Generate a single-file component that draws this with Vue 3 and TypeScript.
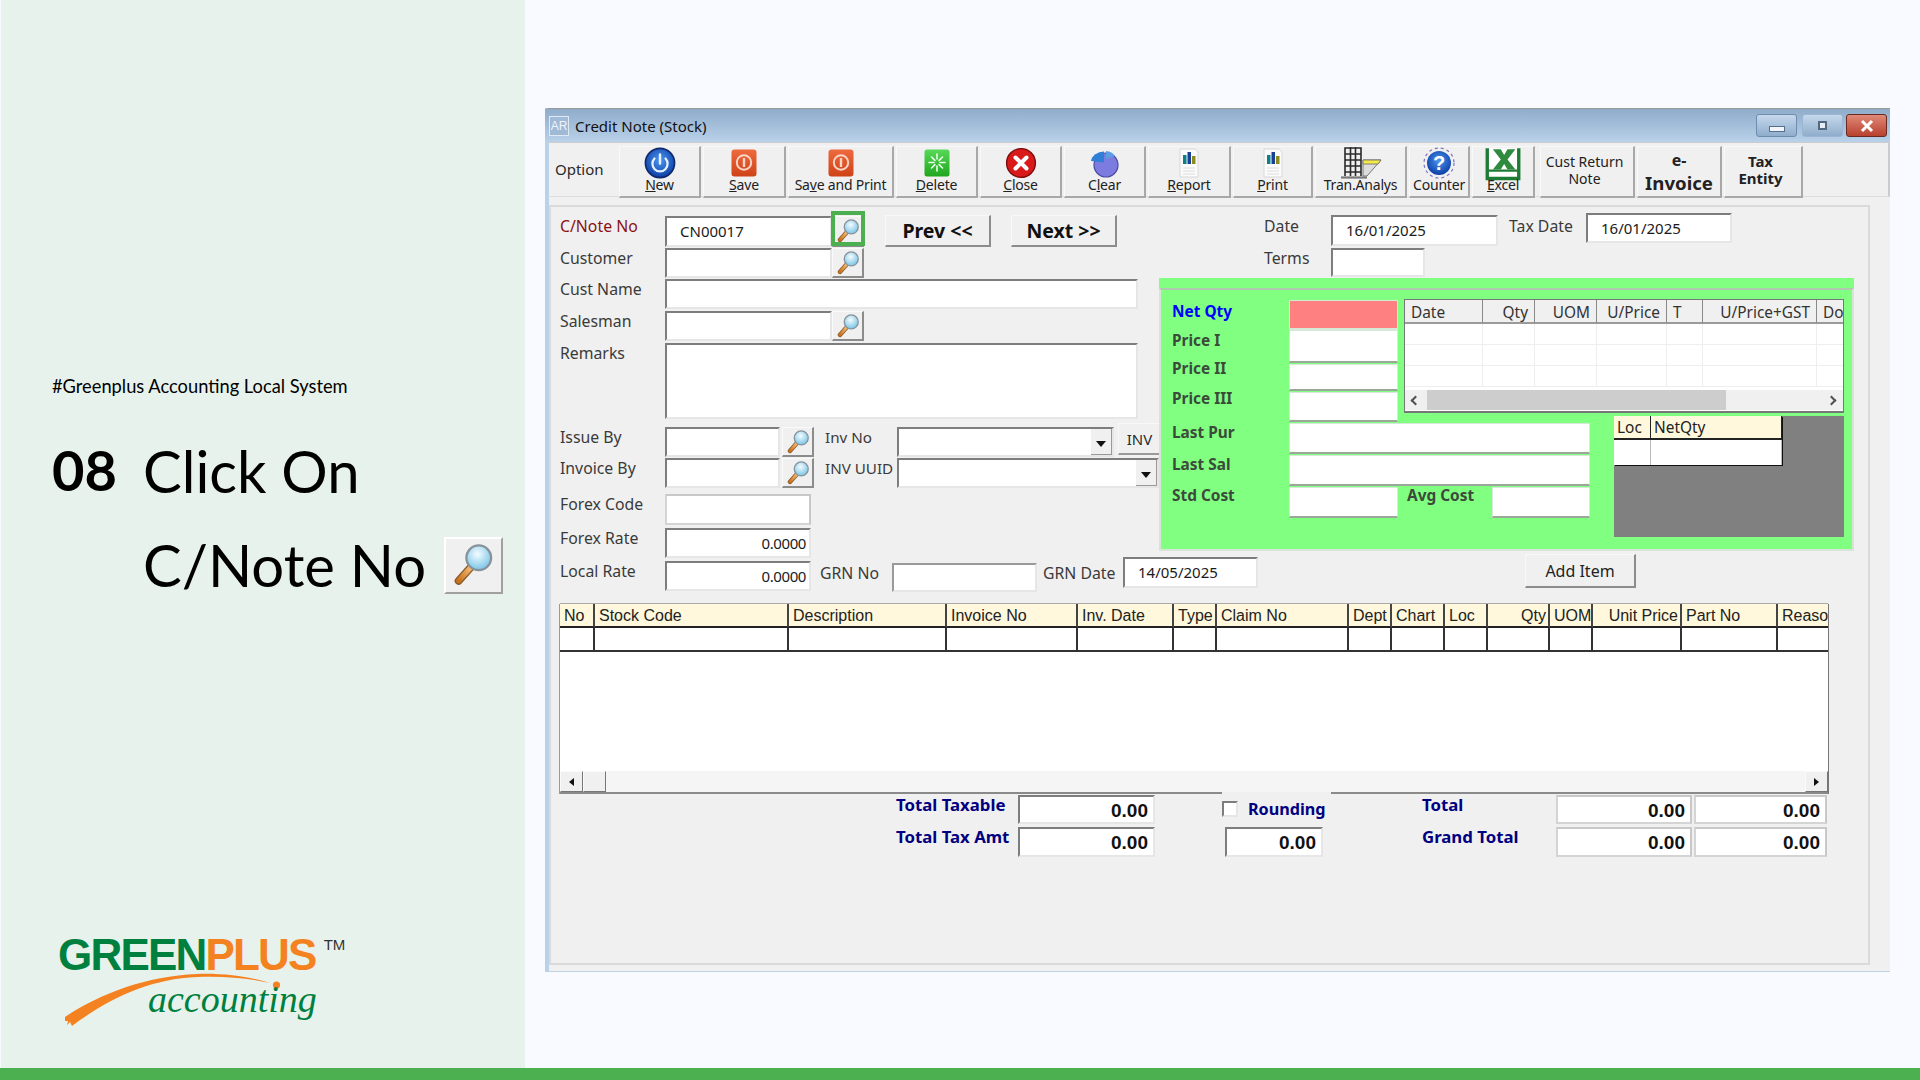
<script setup lang="ts">
interface ToolBtn {
  label: string
  icon: string
  width: number
  ul?: number
}

const toolButtons: ToolBtn[] = [
  { label: 'New', icon: 'power', width: 82, ul: 0 },
  { label: 'Save', icon: 'stop', width: 83, ul: 0 },
  { label: 'Save and Print', icon: 'stop', width: 106, ul: 2 },
  { label: 'Delete', icon: 'burst', width: 82, ul: 0 },
  { label: 'Close', icon: 'close', width: 82, ul: 0 },
  { label: 'Clear', icon: 'pie', width: 82, ul: 1 },
  { label: 'Report', icon: 'report', width: 83, ul: 0 },
  { label: 'Print', icon: 'report', width: 80, ul: 0 },
  { label: 'Tran.Analys', icon: 'tran', width: 92 },
  { label: 'Counter', icon: 'help', width: 61 },
  { label: 'Excel', icon: 'excel', width: 63, ul: 0 },
]

const gridCols = [
  { t: 'No', w: 35 },
  { t: 'Stock Code', w: 194 },
  { t: 'Description', w: 158 },
  { t: 'Invoice No', w: 131 },
  { t: 'Inv. Date', w: 96 },
  { t: 'Type', w: 43 },
  { t: 'Claim No', w: 132 },
  { t: 'Dept', w: 43 },
  { t: 'Chart', w: 53 },
  { t: 'Loc', w: 43 },
  { t: 'Qty', w: 62, right: true },
  { t: 'UOM', w: 43 },
  { t: 'Unit Price', w: 89, right: true },
  { t: 'Part No', w: 96 },
  { t: 'Reason', w: 50 },
]

const priceCols = [
  { t: 'Date', w: 78 },
  { t: 'Qty', w: 52, right: true },
  { t: 'UOM', w: 62, right: true },
  { t: 'U/Price', w: 70, right: true },
  { t: 'T', w: 36 },
  { t: 'U/Price+GST', w: 114, right: true },
  { t: 'Doc', w: 27 },
]

const gridTemplate = gridCols.map((c) => c.w + 'px').join(' ')
const priceTemplate = priceCols.map((c) => c.w + 'px').join(' ')

// the Tran.Analys picture is wider than the others
function iconWidth(icon: string) {
  return icon === 'tran' ? 44 : 32
}
</script>

<template>
  <div class="slide">
    <!-- icon sheet, used through <use> further down -->
    <svg class="defs" width="0" height="0" aria-hidden="true">
      <defs>
        <radialGradient id="lens" cx="45%" cy="35%" r="70%">
          <stop offset="0" stop-color="#f4fcff" />
          <stop offset="1" stop-color="#6fc0e4" />
        </radialGradient>
        <linearGradient id="handle" x1="0" y1="1" x2="1" y2="0">
          <stop offset="0" stop-color="#c8701e" />
          <stop offset="1" stop-color="#f6c27c" />
        </linearGradient>
        <radialGradient id="blueBall" cx="50%" cy="40%" r="60%">
          <stop offset="0" stop-color="#4c96ef" />
          <stop offset="1" stop-color="#0c3fa6" />
        </radialGradient>
        <linearGradient id="stopFill" x1="0" y1="0" x2="0" y2="1">
          <stop offset="0" stop-color="#ee6a3e" />
          <stop offset="1" stop-color="#cf4218" />
        </linearGradient>
        <linearGradient id="burstFill" x1="0" y1="0" x2="0" y2="1">
          <stop offset="0" stop-color="#58d858" />
          <stop offset="1" stop-color="#1fa61f" />
        </linearGradient>
      </defs>
      <symbol id="i-mag" viewBox="0 0 32 32">
        <path d="M6 27 15 17" stroke="#8a5a28" stroke-width="5.5" stroke-linecap="round" />
        <path d="M6 27 15 17" stroke="url(#handle)" stroke-width="3.6" stroke-linecap="round" />
        <circle cx="20" cy="11" r="8.6" fill="url(#lens)" stroke="#87929a" stroke-width="1.6" />
      </symbol>
      <symbol id="i-power" viewBox="0 0 32 32">
        <circle cx="16" cy="16" r="14.6" fill="url(#blueBall)" stroke="#10286a" stroke-width="1.6" />
        <path d="M10.5 11.5a7.6 7.6 0 1 0 11 0" fill="none" stroke="#e8f2ff" stroke-width="2.2" stroke-linecap="round" />
        <path d="M16 7.5v9" stroke="#e8f2ff" stroke-width="2.4" stroke-linecap="round" />
      </symbol>
      <symbol id="i-stop" viewBox="0 0 32 32">
        <rect x="3.5" y="2.5" width="25" height="27" rx="3" fill="url(#stopFill)" />
        <circle cx="16" cy="15.5" r="7.2" fill="none" stroke="#f8d6c6" stroke-width="2" />
        <path d="M16 11v9" stroke="#f8d6c6" stroke-width="2.4" />
      </symbol>
      <symbol id="i-burst" viewBox="0 0 32 32">
        <rect x="3.5" y="2.5" width="25" height="27" rx="2.5" fill="url(#burstFill)" />
        <path d="M16 7v5M16 19v5M8 15.500h5M19 15.500h5M10.500 10l3.400 3.400M21.500 10l-3.400 3.400M10.500 21l3.400-3.400M21.500 21l-3.400-3.400" stroke="#eaffea" stroke-width="1.6" stroke-linecap="round" />
      </symbol>
      <symbol id="i-close" viewBox="0 0 32 32">
        <circle cx="16" cy="16" r="14.4" fill="#d91a1a" stroke="#7a0c0c" stroke-width="1.4" />
        <path d="M10.500 10.500l11 11M21.500 10.500l-11 11" stroke="#fff" stroke-width="4" stroke-linecap="round" />
      </symbol>
      <symbol id="i-pie" viewBox="0 0 32 32">
        <circle cx="17" cy="18" r="12" fill="#7c7ce0" stroke="#4a4aa0" stroke-width="1.2" />
        <path d="M15 4.500a13 11 0 0 0-13 9.500l13 1.500z" fill="#2f7fd6" />
        <path d="M17 4a11 9 0 0 1 9 5l-9 3z" fill="#5a9fe6" />
      </symbol>
      <symbol id="i-report" viewBox="0 0 32 32">
        <path d="M7 2h15l3 3v25H7z" fill="#fbfbfb" stroke="#d8d8d8" />
        <rect x="10" y="8" width="3.500" height="9" fill="#0d7f86" />
        <rect x="14.500" y="5" width="3.500" height="12" fill="#1c3f96" />
        <rect x="19" y="9" width="3.500" height="8" fill="#8c8c1c" />
        <path d="M10 21h12M10 24h12M10 27h12" stroke="#dcdcdc" />
      </symbol>
      <symbol id="i-tran" viewBox="0 0 44 32">
        <path d="M24 13h18L28 29H24z" fill="#dcdcdc" stroke="#777" />
        <path d="M24 13h18l-3 4H24z" fill="#f6e94a" stroke="#666" stroke-width="0.800" />
        <path d="M6 29V1h16v28M6 7h16M6 13h16M6 19h16M6 25h16M11.500 0v29M16.500 0v29" fill="none" stroke="#2a2a2a" stroke-width="1.600" />
        <path d="M2 30.500h26" stroke="#777" stroke-width="2.200" />
      </symbol>
      <symbol id="i-help" viewBox="0 0 32 32">
        <circle cx="16" cy="16" r="15" fill="none" stroke="#7b70c0" stroke-width="1.2" stroke-dasharray="3 3" />
        <circle cx="16" cy="16" r="12" fill="url(#blueBall)" />
      </symbol>
      <symbol id="i-excel" viewBox="0 0 32 32">
        <path d="M2 1v27h28V1" fill="#fff" stroke="#1e7b34" stroke-width="3" />
        <path d="M7 2h7l3 5 3-5h7l-7 9 7 9h-7l-3-5-3 5H7l7-9z" fill="#2f8a3e" />
        <rect x="3" y="20" width="26" height="2" fill="#1e7b34" />
      </symbol>
    </svg>

    <div class="main">
      <aside class="side">
        <p class="tag">#Greenplus Accounting Local System</p>
        <div class="step">
          <div class="step-no">08</div>
          <div class="step-text">
            <div class="step-line">Click On</div>
            <div class="step-line">C/Note No <span class="big-mag"><svg class="big-mag-i"><use href="#i-mag" /></svg></span></div>
          </div>
        </div>

        <div class="logo">
          <svg class="swoosh" viewBox="0 0 290 110">
            <path d="M14 87C50 63 96 46 146 44c28-1 54 3 73 9-22-5-46-7-73-6-46 2-86 20-125 49l-2-4-3 3 1-4-3 0z" fill="#f58220" />
            <circle cx="225.500" cy="55" r="3.600" fill="#f58220" />
          </svg>
          <div class="logo-word"><span class="g">GREEN</span><span class="o">PLUS</span><sup class="tm">TM</sup></div>
          <div class="logo-sub">accounting</div>
        </div>
      </aside>

      <div class="stage">
        <div class="win">
          <div class="titlebar">
            <span class="app-ico">AR</span>
            <span class="title">Credit Note (Stock)</span>
            <div class="ctrls">
              <span class="ctrl min"><i></i></span>
              <span class="ctrl max"><i></i></span>
              <span class="ctrl cls">
                <svg width="18" height="14" viewBox="0 0 18 14"><path d="M4 2l10 10M14 2L4 12" stroke="#fff" stroke-width="3" /></svg>
              </span>
            </div>
          </div>

          <div class="toolbar">
            <div class="opt">Option</div>
            <button
              v-for="b in toolButtons"
              :key="b.label"
              class="tool"
              :style="{ width: b.width + 'px' }"
            >
              <svg
                class="tool-ico"
                :class="{ wide: b.icon === 'tran', big: b.icon === 'excel' }"
                :viewBox="`0 0 ${iconWidth(b.icon)} 32`"
              >
                <use :href="'#i-' + b.icon" :width="iconWidth(b.icon)" height="32" />
                <text v-if="b.icon === 'help'" x="16" y="23" text-anchor="middle" class="help-q">?</text>
              </svg>
              <span class="tool-lbl" v-if="b.ul !== undefined">{{ b.label.slice(0, b.ul) }}<u>{{ b.label[b.ul] }}</u>{{ b.label.slice(b.ul + 1) }}</span>
              <span class="tool-lbl" v-else>{{ b.label }}</span>
            </button>
            <button class="tool txt cust">Cust Return<br />Note</button>
            <button class="tool txt einv"><b class="e">e-</b><b class="inv">Invoice</b></button>
            <button class="tool txt tax"><b>Tax<br />Entity</b></button>
          </div>

          <div class="frame">
            <div class="upper">
              <div class="col-left">
                <div class="row">
                  <label class="lbl req">C/Note No</label>
                  <div class="field w167 h31 pad">CN00017</div>
                  <div class="mag hl"><svg><use href="#i-mag" /></svg></div>
                  <button class="nav prev">Prev &lt;&lt;</button>
                  <button class="nav next">Next &gt;&gt;</button>
                </div>
                <div class="row mt1">
                  <label class="lbl">Customer</label>
                  <div class="field w167"></div>
                  <div class="mag"><svg><use href="#i-mag" /></svg></div>
                </div>
                <div class="row mt1">
                  <label class="lbl">Cust Name</label>
                  <div class="field w473"></div>
                </div>
                <div class="row mt2">
                  <label class="lbl">Salesman</label>
                  <div class="field w167"></div>
                  <div class="mag"><svg><use href="#i-mag" /></svg></div>
                </div>
                <div class="row mt2">
                  <label class="lbl">Remarks</label>
                  <div class="field w473 h76"></div>
                </div>
                <div class="row mt8">
                  <label class="lbl">Issue By</label>
                  <div class="field w115"></div>
                  <div class="mag ml2"><svg><use href="#i-mag" /></svg></div>
                  <label class="lbl lbl-inv">Inv No</label>
                  <div class="field combo w217"><span class="drop"></span></div>
                  <button class="inv-btn">INV</button>
                </div>
                <div class="row mt1">
                  <label class="lbl">Invoice By</label>
                  <div class="field w115"></div>
                  <div class="mag ml2"><svg><use href="#i-mag" /></svg></div>
                  <label class="lbl lbl-inv">INV UUID</label>
                  <div class="field combo w262"><span class="drop"></span></div>
                </div>
                <div class="row mt6">
                  <label class="lbl">Forex Code</label>
                  <div class="field flat w146 h31"></div>
                </div>
                <div class="row mt3">
                  <label class="lbl">Forex Rate</label>
                  <div class="field w146 num">0.0000</div>
                </div>
              </div>

              <div class="col-right">
                <div class="row">
                  <label class="lbl lbl-date">Date</label>
                  <div class="field date w167 h31 mtp2">16/01/2025</div>
                  <label class="lbl lbl-tax">Tax Date</label>
                  <div class="field date w146">16/01/2025</div>
                </div>
                <div class="row terms">
                  <label class="lbl lbl-date">Terms</label>
                  <div class="field w94 h29"></div>
                </div>

                <div class="green">
                  <div class="green-in">
                    <div class="g-top">
                      <div class="g-left">
                        <div class="g-row r0"><span class="g-lbl net">Net Qty</span><div class="g-field red"></div></div>
                        <div class="g-row r1"><span class="g-lbl l1">Price I</span><div class="g-field"></div></div>
                        <div class="g-row r2"><span class="g-lbl l2">Price II</span><div class="g-field"></div></div>
                        <div class="g-row r3"><span class="g-lbl l3">Price III</span><div class="g-field"></div></div>
                      </div>
                      <div class="price-grid">
                        <div class="pg-head" :style="{ gridTemplateColumns: priceTemplate }">
                          <div v-for="c in priceCols" :key="c.t" class="pg-h" :class="{ right: c.right }">{{ c.t }}</div>
                        </div>
                        <div v-for="n in 3" :key="n" class="pg-row" :style="{ gridTemplateColumns: priceTemplate }">
                          <div v-for="c in priceCols" :key="c.t" class="pg-c"></div>
                        </div>
                        <div class="pg-scroll">
                          <span class="chev l"></span>
                          <span class="pg-thumb"></span>
                          <span class="chev r"></span>
                        </div>
                      </div>
                    </div>

                    <div class="g-bottom">
                      <div class="g-costs">
                        <div class="g-row c0"><span class="g-lbl">Last Pur</span><div class="g-field wide"></div></div>
                        <div class="g-row c1"><span class="g-lbl">Last Sal</span><div class="g-field wide"></div></div>
                        <div class="g-row c2">
                          <span class="g-lbl">Std Cost</span>
                          <div class="g-field"></div>
                          <span class="g-lbl avg">Avg Cost</span>
                          <div class="g-field avg-f"></div>
                        </div>
                      </div>
                      <div class="stock-box">
                        <div class="stock-table">
                          <div class="st-h st-loc">Loc</div>
                          <div class="st-h st-net">NetQty</div>
                          <div class="st-c st-loc"></div>
                          <div class="st-c st-net"></div>
                        </div>
                      </div>
                    </div>
                  </div>
                </div>
              </div>
            </div>

            <div class="row row-last">
              <label class="lbl mt7">Local Rate</label>
              <div class="field w146 num mt7">0.0000</div>
              <label class="lbl lbl-grn">GRN No</label>
              <div class="field flatb w145 grn"></div>
              <label class="lbl lbl-grnd">GRN Date</label>
              <div class="field date w135 grnd">14/05/2025</div>
              <button class="add">Add Item</button>
            </div>

            <div class="grid">
              <div class="grid-row head" :style="{ gridTemplateColumns: gridTemplate }">
                <div v-for="c in gridCols" :key="c.t" class="gh" :class="{ right: c.right }">{{ c.t }}</div>
              </div>
              <div class="grid-row body" :style="{ gridTemplateColumns: gridTemplate }">
                <div v-for="c in gridCols" :key="c.t" class="gc"></div>
              </div>
              <div class="grid-empty"></div>
              <div class="grid-scroll">
                <span class="sb-btn"><i class="tri l"></i></span>
                <span class="sb-thumb"></span>
                <span class="sb-btn end"><i class="tri r"></i></span>
              </div>
            </div>

            <div class="totals">
              <div class="t-lbl">Total Taxable</div>
              <div class="field t-val">0.00</div>
              <div></div>
              <div class="rounding"><span class="chk"></span><span class="t-lbl rnd">Rounding</span></div>
              <div></div>
              <div class="t-lbl">Total</div>
              <div class="field flat t-val">0.00</div>
              <div class="field flat t-val ml">0.00</div>

              <div class="t-lbl">Total Tax Amt</div>
              <div class="field t-val">0.00</div>
              <div></div>
              <div class="field t-val small">0.00</div>
              <div></div>
              <div class="t-lbl">Grand Total</div>
              <div class="field flat t-val">0.00</div>
              <div class="field flat t-val ml">0.00</div>
            </div>
          </div>
        </div>
      </div>
    </div>
    <div class="bar"></div>
  </div>
</template>

<style>
html,
body {
  margin: 0;
  background: #f8faff;
}
</style>

<style scoped>
.slide {
  width: 1920px;
  height: 1080px;
  display: flex;
  flex-direction: column;
  overflow: hidden;
  background: #f8faff;
  font-family: 'Noto Sans', sans-serif;
}
.defs {
  position: absolute;
}
.main {
  flex: 1;
  display: flex;
  min-height: 0;
}
.bar {
  height: 12px;
  background: #4caf50;
}

/* left panel */
.side {
  width: 524px;
  margin-left: 1px;
  padding: 374px 0 28px 51px;
  box-sizing: border-box;
  background: #e8f2ec;
  display: flex;
  flex-direction: column;
  font-family: Lato, sans-serif;
  color: #000;
}
.tag {
  margin: 0;
  font-size: 18.300px;
  line-height: 24px;
}
.step {
  display: flex;
  margin-top: 26px;
}
.step-no {
  width: 91px;
  font-size: 56px;
  font-weight: 700;
  line-height: 92px;
}
.step-line {
  height: 94px;
  line-height: 94px;
  font-size: 58px;
  display: flex;
  align-items: center;
  white-space: pre;
}
.big-mag {
  width: 59px;
  height: 57px;
  margin-left: 3px;
  box-sizing: border-box;
  background: #f0f0f0;
  border: 2px solid;
  border-color: #fff #a0a0a0 #a0a0a0 #fff;
  display: flex;
  align-items: center;
  justify-content: center;
}
.big-mag-i {
  width: 46px;
  height: 46px;
}
.logo {
  margin-top: auto;
  margin-left: -1px;
  width: 290px;
  height: 110px;
  position: relative;
}
.swoosh {
  position: absolute;
  inset: 0;
}
.logo-word {
  padding: 0 0 0 7px;
  margin-top: 3px;
  font-family: 'Liberation Sans', sans-serif;
  font-weight: 700;
  font-size: 44px;
  line-height: 44px;
  letter-spacing: -1.800px;
  position: relative;
  white-space: nowrap;
}
.g {
  color: #00803e;
}
.o {
  color: #f58220;
}
.tm {
  font-size: 15px;
  font-weight: 400;
  letter-spacing: 0;
  line-height: 0;
  color: #333;
  margin-left: 8px;
  vertical-align: 20px;
}
.logo-sub {
  position: absolute;
  left: 97px;
  top: 45px;
  font-family: 'Liberation Serif', serif;
  font-style: italic;
  font-size: 38px;
  line-height: 48px;
  color: #00803e;
}

/* window */
.stage {
  flex: 1;
  padding: 108px 0 0 20px;
}
.win {
  width: 1345px;
  height: 864px;
  box-sizing: border-box;
  background: #f0f0f0;
  border-top: 1px solid #999;
  border-bottom: 1px solid #bfd2e6;
  border-left: 4px solid #b9d1ea;
  display: flex;
  flex-direction: column;
  color: #2a2a2a;
}
.titlebar {
  height: 33px;
  margin-left: -4px;
  background: linear-gradient(#8facca, #b9d1ea);
  display: flex;
  align-items: center;
  padding-left: 4px;
  flex: none;
}
.app-ico {
  width: 20px;
  height: 20px;
  box-sizing: border-box;
  border: 1px solid #dfeaf5;
  background: #9fb9d6;
  color: #eef4fb;
  font: 12px/18px 'Liberation Sans', sans-serif;
  text-align: center;
}
.title {
  margin-left: 6px;
  font-size: 15px;
  color: #111;
}
.ctrls {
  margin-left: auto;
  display: flex;
  gap: 5px;
  padding-right: 3px;
}
.ctrl {
  width: 41px;
  height: 23px;
  box-sizing: border-box;
  border-radius: 3px;
  border: 1px solid #6e8cad;
  background: linear-gradient(#c5d8ec, #8fadcc);
  display: flex;
  align-items: center;
  justify-content: center;
}
.ctrl.min i {
  width: 14px;
  height: 4px;
  margin-top: 6px;
  background: #f2f6fb;
  border: 1px solid #55708e;
}
.ctrl.max {
  border-color: #9cb6d2;
}
.ctrl.max i {
  width: 9px;
  height: 9px;
  box-sizing: border-box;
  border: 2px solid #53687e;
  background: #e6edf5;
}
.ctrl.cls {
  margin-left: -2px;
  border-color: #6a2a22;
  background: linear-gradient(#e08a78, #b8402e);
}
.toolbar {
  height: 55px;
  flex: none;
  margin-left: -1px;
  padding-top: 3px;
  box-sizing: border-box;
  display: flex;
  gap: 2px;
  border-bottom: 1px solid #dcdcdc;
  border-right: 2px solid #ccc;
  border-top: 1px solid #ccc;
}
.opt {
  width: 69px;
  padding-left: 7px;
  font-size: 15px;
  line-height: 46px;
  box-sizing: border-box;
}
.tool {
  height: 52px;
  padding: 0;
  background: #f0f0f0;
  border: 1px solid #f8f8f8;
  border-right: 2px solid #a8a8a8;
  border-bottom: 2px solid #a8a8a8;
  color: #222;
  font-family: inherit;
  font-size: 14px;
  line-height: 16px;
  display: flex;
  flex-direction: column;
  align-items: center;
  flex: none;
}
.tool-ico {
  width: 32px;
  height: 32px;
  flex: none;
  overflow: visible;
}
.help-q {
  font-family: 'Liberation Sans', sans-serif;
  font-weight: 700;
  font-size: 20px;
  fill: #fff;
}
.tool-ico.wide {
  width: 44px;
}
.tool-ico.big {
  width: 36px;
  height: 36px;
  margin-bottom: -4px;
}
.tool-lbl {
  margin-top: -2px;
  white-space: nowrap;
  letter-spacing: -0.200px;
}
.tool.txt {
  justify-content: center;
  text-align: center;
  padding-bottom: 4px;
}
.cust {
  width: 95px;
  margin-left: 3px;
  padding-right: 5px;
  line-height: 17px;
}
.einv {
  width: 85px;
}
.tool.einv {
  padding: 4px 0 0;
}
.einv .e {
  font-size: 16px;
  line-height: 17px;
}
.einv .inv {
  font-size: 18.600px;
  line-height: 27px;
}
.tax {
  width: 79px;
  font-size: 15px;
  padding-right: 5px;
}
.tax b {
  line-height: 17px;
}

/* form */
.frame {
  flex: 1;
  margin: 8px 20px 6px 0;
  border: 2px solid #dadada;
  padding: 6px 0 0 9px;
  box-sizing: border-box;
  min-height: 0;
}
.upper {
  display: flex;
  height: 341px;
}
.col-left {
  width: 599px;
  flex: none;
  padding-top: 3px;
  box-sizing: border-box;
}
.col-right {
  width: 695px;
  flex: none;
}
.row {
  display: flex;
  align-items: flex-start;
}
.mt1 { margin-top: 1px; }
.mt2 { margin-top: 2px; }
.mt3 { margin-top: 3px; }
.mt6 { margin-top: 6px; }
.mt8 { margin-top: 8px; }
.mt7 { margin-top: 7px; }
.ml2 { margin-left: 2px; }
.mtp2 { margin-top: 2px; }
.lbl {
  width: 105px;
  flex: none;
  height: 20px;
  line-height: 20px;
  font-size: 15.800px;
  white-space: nowrap;
  color: #3a3a3a;
}
.req {
  color: #8b1010;
}
.field {
  height: 30px;
  flex: none;
  box-sizing: border-box;
  background: #fff;
  border: 2px solid;
  border-color: #7d7d7d #e6e6e6 #e6e6e6 #7d7d7d;
  font-size: 15px;
  line-height: 26px;
  color: #1a1a1a;
  position: relative;
}
.field.flat {
  border-color: #c8c8c8 #c8c8c8 #d4d4d4 #d4d4d4;
}
.field.flatb {
  border-color: #9a9a9a #e6e6e6 #e6e6e6 #9a9a9a;
}
.h31 { height: 31px; }
.h29 { height: 29px; }
.h76 { height: 76px; }
.w94 { width: 94px; }
.w115 { width: 115px; }
.w135 { width: 135px; }
.w145 { width: 145px; }
.w146 { width: 146px; }
.w167 { width: 167px; }
.w217 { width: 217px; }
.w262 { width: 262px; }
.w473 { width: 473px; }
.pad {
  padding-left: 13px;
}
.date {
  padding-left: 13px;
}
.num {
  text-align: right;
  padding-right: 3px;
  letter-spacing: -0.400px;
}
.mag {
  width: 32px;
  height: 30px;
  flex: none;
  box-sizing: border-box;
  background: #f0f0f0;
  border: 1px solid #fafafa;
  border-right: 2px solid #8c8c8c;
  border-bottom: 2px solid #8c8c8c;
  position: relative;
  display: flex;
  align-items: center;
  justify-content: center;
}
.mag svg {
  width: 26px;
  height: 26px;
}
.mag.hl {
  height: 31px;
}
.mag.hl::after {
  content: '';
  position: absolute;
  left: -2px;
  right: -3px;
  top: -6px;
  bottom: -1px;
  border: 4px solid #4caf50;
}
.nav {
  width: 106px;
  height: 32px;
  margin-top: -1px;
  padding: 0;
  box-sizing: border-box;
  background: #f0f0f0;
  border: 1px solid #f8f8f8;
  border-right: 2px solid #8c8c8c;
  border-bottom: 2px solid #8c8c8c;
  font-family: inherit;
  font-weight: 700;
  font-size: 19.500px;
  color: #111;
}
.prev {
  margin-left: 21px;
}
.next {
  margin-left: 20px;
}
.lbl-inv {
  width: 72px;
  margin-left: 11px;
  font-size: 15.200px;
}
.drop {
  position: absolute;
  right: 0;
  top: 0;
  bottom: 0;
  width: 20px;
  background: #f0f0f0;
  border-right: 1px solid #999;
  border-bottom: 1px solid #999;
  display: flex;
  align-items: center;
  justify-content: center;
}
.drop::after {
  content: '';
  margin-top: 4px;
  border: 5px solid transparent;
  border-top: 6px solid #111;
  border-bottom: 0;
}
.inv-btn {
  width: 44px;
  height: 32px;
  margin: -4px 0 0 4px;
  padding: 0;
  background: #f0f0f0;
  border: 1px solid #f8f8f8;
  border-right: 2px solid #9a9a9a;
  border-bottom: 2px solid #9a9a9a;
  font-family: inherit;
  font-size: 15px;
  color: #2a2a2a;
  flex: none;
}
.lbl-date {
  width: 67px;
  margin: 3px 0 0 105px;
}
.lbl-tax {
  width: 77px;
  margin: 3px 0 0 11px;
}
.terms {
  margin-top: 2px;
}
.terms .lbl-date {
  margin-top: 0;
}
.green {
  width: 695px;
  height: 273px;
  margin-top: 1px;
  padding-top: 10px;
  box-sizing: border-box;
  background: #80ff80;
}
.green-in {
  height: 263px;
  box-sizing: border-box;
  border: 2px solid #d8e4d8;
  border-top-color: #b0c8b0;
  padding: 10px 0 0 11px;
}
.g-top {
  display: flex;
  height: 116px;
}
.g-left {
  width: 226px;
  flex: none;
}
.g-row {
  display: flex;
  align-items: flex-start;
}
.g-lbl {
  width: 117px;
  flex: none;
  height: 20px;
  line-height: 20px;
  font-size: 15.400px;
  font-weight: 700;
  color: #3c4a3c;
  white-space: nowrap;
}
.g-lbl.net {
  color: #0000ff;
  margin-top: 2px;
}
.g-field {
  width: 109px;
  height: 100%;
  flex: none;
  box-sizing: border-box;
  background: #fff;
  border: 1px solid #d8e8d8;
  border-bottom: 2px solid #9aa89a;
}
.g-field.red {
  background: #ff8080;
  border-color: #d8e8d8;
}
.r0 { height: 30px; }
.r1 { height: 33px; }
.r2 { height: 27px; margin-top: 1px; }
.r3 { height: 30px; margin-top: 1px; }
.g-lbl.l1 { margin-top: 1px; }
.g-lbl.l2 { margin-top: -5px; }
.g-lbl.l3 { margin-top: -3px; }
.price-grid {
  width: 440px;
  height: 114px;
  margin-left: 6px;
  margin-top: -1px;
  box-sizing: border-box;
  border: 1px solid #777;
  border-width: 1px 1px 2px 1px;
  background: #fff;
  overflow: hidden;
  flex: none;
}
.pg-head,
.pg-row {
  display: grid;
}
.pg-h {
  height: 24px;
  box-sizing: border-box;
  background: #f0f0f0;
  border-right: 1px solid #8a8a8a;
  border-bottom: 2px solid #9a9a9a;
  font-size: 15.400px;
  line-height: 25px;
  padding: 0 6px;
  overflow: hidden;
  white-space: nowrap;
  color: #333;
}
.pg-h.right {
  text-align: right;
}
.pg-row {
  height: 21px;
}
.pg-c {
  border-right: 1px solid #eee;
  border-bottom: 1px solid #eee;
}
.pg-scroll {
  height: 20px;
  margin-top: 3px;
  background: #f0f0f0;
  display: flex;
  align-items: center;
}
.pg-thumb {
  width: 299px;
  height: 100%;
  margin-left: 8px;
  background: #cdcdcd;
}
.chev {
  width: 7px;
  height: 7px;
  box-sizing: border-box;
  border-left: 2px solid #505050;
  border-bottom: 2px solid #505050;
  flex: none;
}
.chev.l {
  margin-left: 7px;
  transform: rotate(45deg);
}
.chev.r {
  margin-left: auto;
  margin-right: 8px;
  transform: rotate(225deg);
}
.g-bottom {
  display: flex;
}
.g-costs {
  width: 442px;
  flex: none;
  padding-top: 7px;
}
.c0,
.c1 {
  height: 31px;
  margin-bottom: 1px;
}
.c2 {
  height: 31px;
}
.c2 .g-lbl {
  margin-top: -1px;
}
.g-field.wide {
  width: 301px;
}
.g-lbl.avg {
  width: 85px;
  margin-left: 9px;
}
.g-field.avg-f {
  width: 98px;
}
.stock-box {
  width: 230px;
  height: 121px;
  background: #808080;
  flex: none;
}
.stock-table {
  width: 168px;
  display: grid;
  grid-template-columns: 37px 131px;
  grid-template-rows: 24px 25px;
  box-shadow: 1px 1px 0 #111;
}
.st-h {
  background: #fff8dc;
  border-bottom: 2px solid #222;
  border-right: 1px solid #222;
  padding-left: 3px;
  font-size: 15.400px;
  line-height: 24px;
  color: #222;
  box-sizing: border-box;
}
.st-c {
  background: #fff;
  border-right: 1px solid #bbb;
}
.lbl-grn {
  width: 72px;
  margin: 9px 0 0 9px;
}
.grn {
  margin-top: 9px;
  height: 29px;
}
.lbl-grnd {
  width: 80px;
  margin: 9px 0 0 6px;
}
.grnd {
  margin-top: 3px;
  height: 31px;
}
.add {
  width: 111px;
  height: 34px;
  margin-left: 267px;
  padding: 0;
  box-sizing: border-box;
  background: #f0f0f0;
  border: 1px solid #f8f8f8;
  border-right: 2px solid #8c8c8c;
  border-bottom: 2px solid #8c8c8c;
  font-family: inherit;
  font-size: 16px;
  color: #222;
}

/* main grid */
.grid {
  width: 1268px;
  margin-top: 12px;
  box-sizing: border-box;
  background: #fff;
  font-family: 'Liberation Sans', sans-serif;
  box-shadow: 0 -1px 0 #aaa, -1px 0 0 #999, 1px 0 0 #777;
}
.grid-row {
  display: grid;
}
.gh {
  height: 24px;
  box-sizing: border-box;
  background: #fff8dc;
  border-right: 2px solid #444;
  border-bottom: 2px solid #222;
  font-size: 16px;
  line-height: 23px;
  padding: 0 4px;
  overflow: hidden;
  white-space: nowrap;
  color: #222;
}
.gh.right {
  text-align: right;
  padding-right: 2px;
}
.gh:last-child {
  border-right: 0;
}
.gc {
  height: 24px;
  box-sizing: border-box;
  border-right: 2px solid #333;
  border-bottom: 2px solid #333;
}
.gc:last-child {
  border-right: 0;
}
.grid-empty {
  height: 119px;
}
.grid-scroll {
  height: 23px;
  display: flex;
  box-sizing: border-box;
  background: #f5f5f5;
  border-bottom: 2px solid #8a8a8a;
}
.sb-btn,
.sb-thumb {
  width: 23px;
  box-sizing: border-box;
  background: #f0f0f0;
  border: 1px solid #fafafa;
  border-right: 1px solid #777;
  border-bottom: 1px solid #777;
  display: flex;
  align-items: center;
  justify-content: center;
}
.sb-btn.end {
  margin-left: auto;
}
.tri {
  border: 4px solid transparent;
}
.tri.l {
  border-right: 5px solid #111;
  border-left: 0;
}
.tri.r {
  border-left: 5px solid #111;
  border-right: 0;
}

/* totals */
.totals {
  display: grid;
  grid-template-columns: 122px 137px 67px 109px 91px 134px 136px 136px;
  grid-template-rows: 29px 30px;
  row-gap: 3px;
  margin-left: 336px;
  margin-top: 1px;
}
.t-lbl {
  font-size: 16.800px;
  font-weight: 700;
  color: #000080;
  line-height: 19px;
  white-space: nowrap;
}
.t-val {
  height: 100%;
  text-align: right;
  padding-right: 5px;
  font-family: 'Liberation Sans', sans-serif;
  font-weight: 700;
  font-size: 19px;
  line-height: 27px;
  color: #111;
}
.t-val.ml {
  margin-left: 2px;
  width: 133px;
}
.t-val.small {
  width: 98px;
  margin-left: 3px;
}
.rounding {
  position: relative;
  display: flex;
  align-items: flex-start;
  margin-top: -3px;
  padding-top: 9px;
  height: 30px;
  box-sizing: border-box;
  background: #f0f0f0;
}
.chk {
  width: 16px;
  height: 16px;
  box-sizing: border-box;
  background: #fff;
  border: 2px solid;
  border-color: #7d7d7d #e6e6e6 #e6e6e6 #7d7d7d;
  margin-right: 10px;
  flex: none;
}
.rnd {
  font-size: 16.200px;
  line-height: 17px;
}
</style>
